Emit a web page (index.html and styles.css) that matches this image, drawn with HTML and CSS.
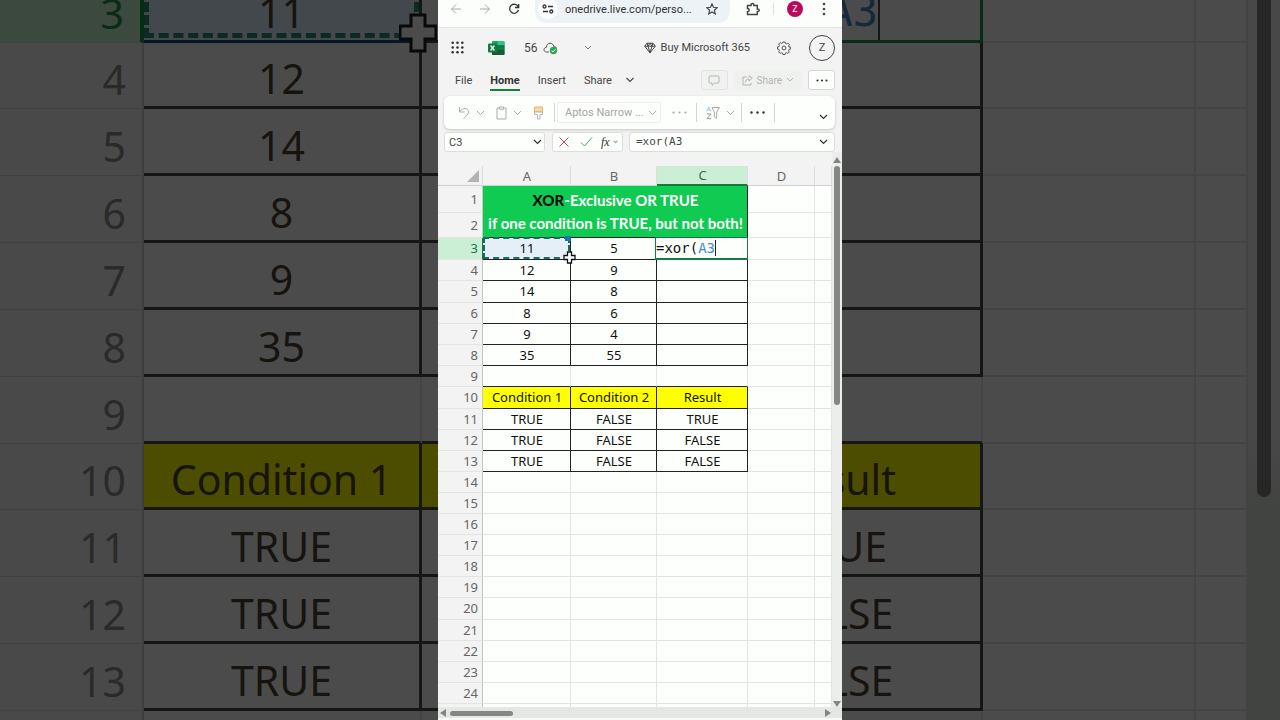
FILE: index.html
```html
<!DOCTYPE html>
<html lang="en">
<head>
<meta charset="utf-8">
<title>56 - Excel</title>
<link rel="stylesheet" href="styles.css">
</head>
<body>
<div class="stage">
  <aside class="backdrop backdrop-left" aria-hidden="true">
    <table class="zoomed">
      <colgroup><col class="z-head"><col class="z-col"><col class="z-col"></colgroup>
      <tr><th class="z-active">3</th><td class="z-ref">11<svg class="z-cross" width="38" height="40" viewBox="0 0 38 40"><path d="M12 2h14v11h11v13H26v12H12V26H1V13h11z" fill="#4b4b4b" stroke="#090909" stroke-width="3"/></svg></td><td></td></tr>
      <tr><th>4</th><td>12</td><td></td></tr>
      <tr><th>5</th><td>14</td><td></td></tr>
      <tr><th>6</th><td>8</td><td></td></tr>
      <tr><th>7</th><td>9</td><td></td></tr>
      <tr><th>8</th><td>35</td><td></td></tr>
      <tr><th>9</th><td class="z-open"></td><td class="z-open"></td></tr>
      <tr><th>10</th><td class="z-yellow">Condition 1</td><td class="z-yellow"></td></tr>
      <tr><th>11</th><td>TRUE</td><td></td></tr>
      <tr><th>12</th><td>TRUE</td><td></td></tr>
      <tr><th>13</th><td>TRUE</td><td></td></tr>
      <tr><th></th><td class="z-blank"></td><td class="z-blank"></td></tr>
    </table>
  </aside>

  <main class="panel">
    <div class="browser">
      <button class="icon" aria-label="Back"><svg width="12" height="12" viewBox="0 0 12 12"><path d="M11 6H1.500M6 1.500L1.500 6L6 10.500" stroke="#aaa"/></svg></button>
      <button class="icon" aria-label="Forward"><svg width="12" height="12" viewBox="0 0 12 12"><path d="M1 6h9.500M6 1.500L10.500 6L6 10.500" stroke="#aaa"/></svg></button>
      <button class="icon" aria-label="Reload"><svg width="12" height="12" viewBox="0 0 12 12"><path d="M10.300 4A4.500 4.500 0 1 0 10.500 7M10.700 1v3.500H7" stroke="#333" stroke-width="1.300"/></svg></button>
      <label class="address">
        <span class="site"><svg width="12" height="10" viewBox="0 0 12 10"><g stroke="#333" stroke-width="1.300"><circle cx="2.500" cy="2.500" r="1.500"/><path d="M6 2.500h5M1 7.500h5"/><circle cx="9.300" cy="7.500" r="1.500"/></g></svg></span>
        <input aria-label="Address" value="onedrive.live.com/perso...">
        <svg width="12" height="12" viewBox="0 0 12 12"><path d="M6 .9l1.500 3.400 3.700.4-2.800 2.500.8 3.700L6 9l-3.200 1.900.8-3.700L.8 4.700l3.700-.4z" stroke="#444" stroke-width="1.200"/></svg>
      </label>
      <button class="icon ext" aria-label="Extensions"><svg width="14" height="14" viewBox="0 0 14 14"><path d="M1.500 3.500H5c0-2.700 3-2.700 3 0h3.300V7c2.600 0 2.600 2.600 0 2.600v2.900H1.500V9.700c2.200 0 2.200-3.200 0-3.200z" stroke="#444" stroke-width="1.500"/></svg></button>
      <span class="divider"></span>
      <button class="profile" aria-label="Profile">Z</button>
      <button class="icon" aria-label="Browser menu"><svg width="4" height="14" viewBox="0 0 4 14"><g fill="#444"><circle cx="2" cy="2" r="1.300"/><circle cx="2" cy="7" r="1.300"/><circle cx="2" cy="12" r="1.300"/></g></svg></button>
    </div>

    <header class="titlebar">
      <button class="icon" aria-label="App launcher"><svg width="13" height="13" viewBox="0 0 13 13"><g fill="#333"><circle cx="1.700" cy="1.700" r="1.300"/><circle cx="6.500" cy="1.700" r="1.300"/><circle cx="11.300" cy="1.700" r="1.300"/><circle cx="1.700" cy="6.500" r="1.300"/><circle cx="6.500" cy="6.500" r="1.300"/><circle cx="11.300" cy="6.500" r="1.300"/><circle cx="1.700" cy="11.300" r="1.300"/><circle cx="6.500" cy="11.300" r="1.300"/><circle cx="11.300" cy="11.300" r="1.300"/></g></svg></button>
      <svg class="excel" width="17" height="16" viewBox="0 0 17 16"><rect x="4" y="1" width="12.500" height="14" rx="1" fill="#21a366"/><path d="M10 1h5.500a1 1 0 0 1 1 1v3H10z" fill="#33c481"/><path d="M4 5h6v5H4z" fill="#107c41"/><path d="M4 10h12.500v4a1 1 0 0 1-1 1H5a1 1 0 0 1-1-1z" fill="#185c37"/><path d="M10 10h6.500v-5H10z" fill="#107c41"/><rect y="3.500" width="9" height="9" rx="1" fill="#0f7b3e"/><path d="M2.600 5.500l3.800 5M6.400 5.500l-3.800 5" stroke="#fff" stroke-width="1.300"/></svg>
      <span class="filename">56</span>
      <svg class="cloud" width="15" height="14" viewBox="0 0 15 14"><path d="M6 11H3.500C.2 11 .2 6.500 3.400 6.300C3.600 1 10.300 1 10.800 5.600C12 5.600 13 6 13.500 7" stroke="#555"/><circle cx="10.500" cy="9.500" r="3.700" fill="#2fa84f"/><path d="M8.700 9.600l1.300 1.300 2.300-2.500" stroke="#fff"/></svg>
      <button class="icon more-file" aria-label="File details"><svg width="8" height="6" viewBox="0 0 8 6"><path d="M1 1l3 3 3-3" stroke="#777"/></svg></button>
      <a class="buy" href="#"><svg width="12" height="12" viewBox="0 0 12 12"><path d="M3 1.200h6l2.300 3L6 10.900.7 4.200zM.7 4.200h10.600M3 1.200l1 3L6 10.900l2-6.700 1-3M4 4.200l2-3 2 3" stroke="#444"/></svg>Buy Microsoft 365</a>
      <button class="icon" aria-label="Settings"><svg width="14" height="14" viewBox="0 0 14 14"><path d="M5.900 1h2.200l.4 1.500 1 .4 1.400-.8 1.500 1.500-.8 1.400.4 1L13.400 6v2.200l-1.500.4-.4 1 .8 1.400-1.500 1.500-1.400-.8-1 .4-.3 1.400H5.900l-.4-1.500-1-.4-1.400.8-1.500-1.500.8-1.400-.4-1L.6 8.100V5.900l1.500-.4.4-1-.9-1.400 1.500-1.500 1.400.8 1-.4z" stroke="#555"/><circle cx="7" cy="7" r="1.900" stroke="#555"/></svg></button>
      <button class="account" aria-label="Account">Z</button>
    </header>

    <nav class="tabs">
      <button class="tab">File</button>
      <button class="tab current">Home</button>
      <button class="tab">Insert</button>
      <button class="tab">Share</button>
      <button class="icon" aria-label="More tabs"><svg width="10" height="6" viewBox="0 0 10 6"><path d="M1.500 1L5 4.500 8.500 1" stroke="#444" stroke-width="1.100"/></svg></button>
      <div class="tab-actions">
        <button class="boxed pale" aria-label="Comments"><svg width="12" height="11" viewBox="0 0 12 11"><path d="M2 1h8a1 1 0 0 1 1 1v5a1 1 0 0 1-1 1H6.500L4 10.300V8H2a1 1 0 0 1-1-1V2a1 1 0 0 1 1-1z" stroke="#b5b5b5"/></svg></button>
        <button class="share"><svg width="11" height="11" viewBox="0 0 11 11"><path d="M5 2H1v8h8V8M3.500 7.500C3.500 5 5 4 7 4V6l3.300-3L7 .8V2.500" stroke="#b5b5b5"/></svg>Share<svg width="8" height="6" viewBox="0 0 8 6"><path d="M1 1l3 3 3-3" stroke="#b5b5b5"/></svg></button>
        <button class="boxed" aria-label="More options"><svg width="12" height="3" viewBox="0 0 12 3"><g fill="#333"><circle cx="1.500" cy="1.500" r="1.100"/><circle cx="6" cy="1.500" r="1.100"/><circle cx="10.500" cy="1.500" r="1.100"/></g></svg></button>
      </div>
    </nav>

    <div class="ribbon">
      <button class="icon" aria-label="Undo"><svg width="12" height="14" viewBox="0 0 12 14"><path d="M1.500 1v5h5M1.700 5.700C4.500 1 10.500 2 10.500 6c0 2-1.500 3.500-5 6.500" stroke="#aaa"/></svg></button>
      <button class="icon" aria-label="Undo list"><svg width="9" height="6" viewBox="0 0 9 6"><path d="M1 1l3.500 3.500L8 1" stroke="#aaa"/></svg></button>
      <button class="icon paste" aria-label="Paste"><svg width="11" height="14" viewBox="0 0 11 14"><path d="M3 2H1v11h9V2H8M3.500 1h4v2.200h-4z" stroke="#aaa"/></svg></button>
      <button class="icon" aria-label="Paste options"><svg width="9" height="6" viewBox="0 0 9 6"><path d="M1 1l3.500 3.500L8 1" stroke="#aaa"/></svg></button>
      <button class="icon brush" aria-label="Format painter"><svg width="11" height="14" viewBox="0 0 11 14"><path d="M1.500 1h8v5h-8z" fill="#fbd99a" stroke="#e6b668"/><path d="M1.500 6h8v2.500H7v4.500H4.500V8.500h-3z" stroke="#b5b5b5" fill="#fff"/></svg></button>
      <span class="rule"></span>
      <span class="font-box"><select aria-label="Font"><option>Aptos Narrow ...</option></select><svg width="9" height="6" viewBox="0 0 9 6"><path d="M1 1l3.500 3.500L8 1" stroke="#aaa"/></svg></span>
      <button class="icon dots" aria-label="More font options"><svg width="15" height="3" viewBox="0 0 15 3"><g fill="#aaa"><circle cx="1.500" cy="1.500" r="1.100"/><circle cx="7.500" cy="1.500" r="1.100"/><circle cx="13.500" cy="1.500" r="1.100"/></g></svg></button>
      <span class="rule"></span>
      <button class="icon filter" aria-label="Sort and filter"><svg width="14" height="14" viewBox="0 0 14 14"><path d="M6 1.500h7.500L10.700 6v6.500L8.300 11V6z" stroke="#aaa"/><path d="M.8 5.500L2.800.8l2 4.700M1.500 4h2.600" stroke="#a8c4dc"/><path d="M1 8h4L1 12.700h4.200" stroke="#999"/></svg></button>
      <button class="icon" aria-label="Filter options"><svg width="9" height="6" viewBox="0 0 9 6"><path d="M1 1l3.500 3.500L8 1" stroke="#aaa"/></svg></button>
      <span class="rule"></span>
      <button class="icon commands" aria-label="More commands"><svg width="15" height="3" viewBox="0 0 15 3"><g fill="#333"><circle cx="1.500" cy="1.500" r="1.200"/><circle cx="7.500" cy="1.500" r="1.200"/><circle cx="13.500" cy="1.500" r="1.200"/></g></svg></button>
      <span class="rule"></span>
      <button class="icon expand" aria-label="Ribbon display options"><svg width="9" height="6" viewBox="0 0 9 6"><path d="M1 1l3.500 3.500L8 1" stroke="#333" stroke-width="1.200"/></svg></button>
    </div>

    <div class="formula-row">
      <label class="field name-box"><input aria-label="Name box" value="C3"><svg width="9" height="6" viewBox="0 0 9 6"><path d="M1 1l3.500 3.500L8 1" stroke="#333" stroke-width="1.200"/></svg></label>
      <div class="field entry">
        <button class="icon" aria-label="Cancel"><svg width="12" height="12" viewBox="0 0 12 12"><path d="M1.500 1.500l9 9M10.500 1.500l-9 9" stroke="#c4405a"/></svg></button>
        <button class="icon" aria-label="Enter"><svg width="13" height="12" viewBox="0 0 13 12"><path d="M1 6.500l3.500 3.500L12 1.500" stroke="#4f9d74"/></svg></button>
        <button class="fx" aria-label="Insert function"><i>fx</i><svg width="5" height="4" viewBox="0 0 8 6"><path d="M1 1l3 3 3-3" stroke="#aaa" stroke-width="2"/></svg></button>
      </div>
      <label class="field formula"><input aria-label="Formula" value="=xor(A3"><svg width="9" height="6" viewBox="0 0 9 6"><path d="M1 1l3.500 3.500L8 1" stroke="#333" stroke-width="1.200"/></svg></label>
    </div>

    <div class="workspace">
      <div class="sheet">
        <table class="grid">
          <colgroup><col class="c-head"><col class="c-a"><col class="c-b"><col class="c-c"><col class="c-d"><col></colgroup>
          <tr class="letters"><th class="corner"><svg width="12" height="12" viewBox="0 0 12 12"><path d="M12 0v12H0z" fill="#b3b3b3"/></svg></th><th>A</th><th>B</th><th class="active-col">C</th><th>D</th><th></th></tr>
          <tr class="r1"><th>1</th><td class="banner" colspan="3" rowspan="2"><b>XOR</b>-Exclusive OR TRUE<br>if one condition is TRUE, but not both!</td><td></td><td></td></tr>
          <tr class="r2"><th>2</th><td></td><td></td></tr>
          <tr class="tall data"><th class="active-row">3</th><td class="ref">11<span class="ants"></span><span class="handle"></span><svg class="cross" width="13" height="13" viewBox="0 0 13 13"><path d="M4.500 1h4v3.500H12v4H8.500V12h-4V8.500H1v-4h3.500z" fill="#fff" stroke="#111" stroke-width="1.300"/></svg></td><td>5</td><td class="editing"><span class="edit-box">=xor(<em>A3</em></span></td><td></td><td></td></tr>
          <tr class="data"><th>4</th><td>12</td><td>9</td><td></td><td></td><td></td></tr>
          <tr class="tall data"><th>5</th><td>14</td><td>8</td><td></td><td></td><td></td></tr>
          <tr class="data"><th>6</th><td>8</td><td>6</td><td></td><td></td><td></td></tr>
          <tr class="data"><th>7</th><td>9</td><td>4</td><td></td><td></td><td></td></tr>
          <tr class="data"><th>8</th><td>35</td><td>55</td><td></td><td></td><td></td></tr>
          <tr class="spacer"><th>9</th><td></td><td></td><td></td><td></td><td></td></tr>
          <tr class="tall data heads"><th>10</th><td>Condition 1</td><td>Condition 2</td><td>Result</td><td></td><td></td></tr>
          <tr class="data"><th>11</th><td>TRUE</td><td>FALSE</td><td>TRUE</td><td></td><td></td></tr>
          <tr class="data"><th>12</th><td>TRUE</td><td>FALSE</td><td>FALSE</td><td></td><td></td></tr>
          <tr class="data"><th>13</th><td>TRUE</td><td>FALSE</td><td>FALSE</td><td></td><td></td></tr>
          <tr><th>14</th><td></td><td></td><td></td><td></td><td></td></tr>
          <tr><th>15</th><td></td><td></td><td></td><td></td><td></td></tr>
          <tr><th>16</th><td></td><td></td><td></td><td></td><td></td></tr>
          <tr><th>17</th><td></td><td></td><td></td><td></td><td></td></tr>
          <tr><th>18</th><td></td><td></td><td></td><td></td><td></td></tr>
          <tr><th>19</th><td></td><td></td><td></td><td></td><td></td></tr>
          <tr class="tall"><th>20</th><td></td><td></td><td></td><td></td><td></td></tr>
          <tr><th>21</th><td></td><td></td><td></td><td></td><td></td></tr>
          <tr><th>22</th><td></td><td></td><td></td><td></td><td></td></tr>
          <tr><th>23</th><td></td><td></td><td></td><td></td><td></td></tr>
          <tr><th>24</th><td></td><td></td><td></td><td></td><td></td></tr>
          <tr><th></th><td></td><td></td><td></td><td></td><td></td></tr>
        </table>
      </div>
      <div class="vscroll">
        <svg width="8" height="6" viewBox="0 0 8 6"><path d="M4 0l4 6H0z" fill="#858785"/></svg>
        <div class="vtrack"><div class="vthumb"></div></div>
        <svg width="8" height="6" viewBox="0 0 8 6"><path d="M4 6l4-6H0z" fill="#858785"/></svg>
      </div>
    </div>
    <div class="hscroll">
      <svg width="6" height="8" viewBox="0 0 6 8"><path d="M0 4l6-4v8z" fill="#858785"/></svg>
      <div class="htrack"><div class="hthumb"></div></div>
      <svg width="6" height="8" viewBox="0 0 6 8"><path d="M6 4L0 0v8z" fill="#858785"/></svg>
    </div>
  </main>

  <aside class="backdrop backdrop-right" aria-hidden="true">
    <table class="zoomed">
      <colgroup><col class="z-c"><col class="z-d"><col class="z-e"></colgroup>
      <tr><td class="z-edit"><span class="z-formula">=xor(<em>A3</em></span></td><td class="z-blank"></td><td class="z-blank"></td></tr>
      <tr><td></td><td class="z-blank"></td><td class="z-blank"></td></tr>
      <tr><td></td><td class="z-blank"></td><td class="z-blank"></td></tr>
      <tr><td></td><td class="z-blank"></td><td class="z-blank"></td></tr>
      <tr><td></td><td class="z-blank"></td><td class="z-blank"></td></tr>
      <tr><td></td><td class="z-blank"></td><td class="z-blank"></td></tr>
      <tr><td class="z-open"></td><td class="z-blank"></td><td class="z-blank"></td></tr>
      <tr><td class="z-yellow">Result</td><td class="z-blank"></td><td class="z-blank"></td></tr>
      <tr><td>TRUE</td><td class="z-blank"></td><td class="z-blank"></td></tr>
      <tr><td>FALSE</td><td class="z-blank"></td><td class="z-blank"></td></tr>
      <tr><td>FALSE</td><td class="z-blank"></td><td class="z-blank"></td></tr>
      <tr><td class="z-blank"></td><td class="z-blank"></td><td class="z-blank"></td></tr>
    </table>
    <div class="z-scroll"><div class="z-thumb"></div></div>
  </aside>
</div>
</body>
</html>
```
FILE: styles.css
```css
* { box-sizing: border-box; }

body {
  margin: 0;
  background: #4b4b4b;
  font-family: Roboto, "Liberation Sans", sans-serif;
  font-size: 11px;
  color: #444;
}

button, input, select {
  margin: 0;
  padding: 0;
  border: 0;
  background: none;
  font: inherit;
  color: inherit;
  outline: none;
}

svg { display: block; flex: none; fill: none; }

.stage {
  display: grid;
  grid-template-columns: 1fr minmax(404px, 31%) 1fr;
  height: 100vh;
  overflow: hidden;
}

.icon { display: flex; align-items: center; flex: none; }

/* Enlarged, dimmed sheet at both sides */
.backdrop { display: flex; overflow: hidden; min-width: 0; }
.backdrop-right { justify-content: flex-end; }

.zoomed {
  flex: none;
  align-self: flex-start;
  margin-top: -24px;
  border-collapse: separate;
  border-spacing: 0;
  table-layout: fixed;
  font: 41px/56px "Noto Sans", sans-serif;
  color: #17130f;
}
.backdrop-left .zoomed { width: 700px; }
.backdrop-right .zoomed { width: 555px; }
.z-head { width: 144px; }
.z-col { width: 278px; }
.z-c { width: 290px; }
.z-d { width: 213px; }
.z-e { width: 52px; }

.zoomed tr { height: 67px; }
.zoomed tr:nth-child(6n+2) { height: 66px; }
.zoomed th, .zoomed td { padding: 7px 0 0; overflow: hidden; white-space: nowrap; }
.zoomed th {
  padding-right: 16px;
  text-align: right;
  font-weight: 400;
  color: #2b2a29;
  background: #494949;
  border-right: 2px solid #3d3f3e;
  border-bottom: 1px solid #424242;
}
.zoomed td {
  text-align: center;
  border-right: 3px solid #151715;
  border-bottom: 3px solid #151715;
}
.zoomed .z-open { border-right: 2px solid #444; }
.zoomed .z-blank { border-right: 2px solid #444543; border-bottom: 2px solid #444543; }
.zoomed .z-yellow { background: #4d4d00; }
.zoomed .z-active { color: #082c15; background: #3c493f; border-right: 4px solid #082c15; }
.zoomed .z-ref {
  position: relative;
  overflow: visible;
  background: #42484c;
  border-bottom-color: #041726;
}
.zoomed .z-ref::after {
  content: "";
  position: absolute;
  inset: 0 0 2px 0;
  border: 5px dashed #0b2b20;
  border-top: 0;
}
.z-cross { position: absolute; right: -18px; bottom: -13px; z-index: 1; }
.zoomed .z-edit { padding: 0; border-color: #082c15; }
.z-formula {
  display: block;
  width: 187px;
  padding-top: 7px;
  border-right: 2px solid #151715;
  font-family: "DejaVu Sans Mono", monospace;
  font-size: 42px;
  direction: rtl;
  unicode-bidi: plaintext;
  text-align: right;
}
.z-formula em { font-style: normal; color: #15283c; }
.z-scroll { flex: none; width: 32px; padding: 0 9px; background: linear-gradient(#484848, #484848 60%, #424441 70%); }
.z-thumb { width: 14px; height: 69%; background: #272727; border-radius: 0 0 7px 7px; }

/* Spreadsheet window */
.panel { display: flex; flex-direction: column; min-width: 0; background: #f3f3f3; overflow: hidden; }

.browser {
  display: flex;
  align-items: center;
  height: 28px;
  padding: 0 16px 10px 12px;
  gap: 17px;
  background: #fcfefb;
  border-bottom: 1px solid #e3e5e3;
}
.address {
  display: flex;
  align-items: center;
  flex: 1;
  min-width: 0;
  align-self: flex-start;
  height: 23px;
  margin: 0 -1px 0 -2px;
  padding: 0 12px 5px 3px;
  background: #edf2f7;
  border-radius: 0 0 12px 12px;
}
.site { display: grid; place-items: center; width: 20px; height: 20px; background: #fff; border-radius: 10px; margin-right: 7px; }
.address input { flex: 1; min-width: 0; height: 16px; color: #333; }
.divider { width: 1px; height: 12px; margin: 0 -4px; background: #d9e2ee; }
.profile { width: 16px; height: 16px; margin-right: 2px; border-radius: 8px; background: #b80a5b; color: #fff; font-size: 9px; }

.titlebar { display: flex; align-items: center; height: 39px; padding: 0 7px 0 13px; }
.excel { margin-left: 24px; }
.filename { margin: 0 5px 0 19px; font-size: 12px; }
.more-file { margin-left: 26px; }
.buy { display: flex; align-items: center; gap: 5px; margin: 0 27px 0 auto; color: #444; text-decoration: none; }
.account { width: 26px; height: 26px; margin-left: 18px; border: 1px solid #444; border-radius: 13px; }

.tabs { display: flex; align-items: center; height: 26px; padding: 0 7px 0 17px; gap: 18px; }
.tab { position: relative; height: 24px; }
.current { font-weight: 700; color: #333; }
.current::after { content: ""; position: absolute; left: 0; right: 0; bottom: 1px; height: 2px; background: #15803f; }
.tabs > .icon { margin-left: -5px; }
.tab-actions { display: flex; gap: 6px; margin-left: auto; }
.boxed { display: grid; place-items: center; width: 27px; height: 20px; background: #fdfffc; border: 1px solid #d6d6d6; border-radius: 3px; }
.pale { background: #f0f2ef; border-color: #e2e4e1; }
.share { display: flex; align-items: center; gap: 4px; height: 20px; padding: 0 8px; background: #eff1ee; border-radius: 3px; color: #b5b5b5; font-size: 10px; }

.ribbon {
  display: flex;
  align-items: center;
  height: 33px;
  margin: 3px 7px 0 6px;
  padding: 0 7px 0 14px;
  gap: 6px;
  background: #fdfffc;
  border-radius: 6px;
  box-shadow: 0 1px 3px #00000030;
}
.paste, .brush { margin-left: 5px; }
.rule { flex: none; width: 1px; height: 19px; background: #d5d7d4; }
.brush + .rule { margin: 0 -4px 0 4px; }
.font-box { display: flex; align-items: center; flex: 1; height: 21px; min-width: 0; max-width: 104px; padding: 0 3px 0 7px; border: 1px solid #eceeeb; border-radius: 2px; color: #a5a5a5; }
.font-box select { flex: 1; min-width: 0; appearance: none; }
.dots { margin: 0 3px 0 5px; }
.filter { margin-left: 3px; }
.commands { margin: 0 3px 0 2px; }
.expand { margin: 9px 0 0 auto; }

.formula-row { display: flex; gap: 7px; padding: 3px 7px 0 6px; }
.field { display: flex; align-items: center; height: 20px; padding: 0 6px 0 4px; background: #fdfffc; border: 1px solid #dcdedb; border-radius: 3px; }
.field input { flex: 1; min-width: 0; }
.name-box { flex: none; width: 101px; padding-right: 2px; }
.entry { flex: none; width: 71px; padding: 0 3px 0 5px; gap: 10px; }
.fx { display: flex; align-items: center; gap: 3px; margin-left: -2px; font: 12px "Liberation Serif", serif; color: #333; }
.formula { flex: 1; min-width: 0; padding-left: 6px; margin-left: -1px; font-family: "DejaVu Sans Mono", monospace; }
.formula input { padding-bottom: 2px; }

.workspace { display: flex; flex: 1; min-height: 0; }
.sheet { flex: 1; min-width: 0; padding-top: 14px; overflow: hidden; }

.grid {
  width: 100%;
  border-collapse: separate;
  border-spacing: 0;
  table-layout: fixed;
  font: 13px/19px "Noto Sans", sans-serif;
  color: #111;
  background: #fdfffc;
}
.c-head { width: 45px; }
.c-a { width: 88px; }
.c-b { width: 86px; }
.c-c { width: 91px; }
.c-d { width: 67px; }

.grid tr { height: 21px; }
.grid .letters { height: 20px; line-height: 18px; }
.grid .r1 { height: 27px; }
.grid .r2 { height: 25px; }
.grid .tall { height: 22px; }
.grid th, .grid td { padding: 0; border-right: 1px solid #e2e5e1; border-bottom: 1px solid #e2e5e1; }
.grid th { padding-right: 4px; text-align: right; font-weight: 400; color: #666; background: #f3f3f3; border-right-color: #c6c8c6; }
.grid .letters th { padding: 0 0 0 1px; text-align: center; border-right-color: #dddfdd; border-bottom-color: #cfd1cf; }
.grid .letters .corner { padding-right: 3px; }
.corner svg { margin-left: auto; }
.grid .letters .active-col { color: #3d6b4e; background: #caefd5; border-bottom: 2px solid #157a3f; }
.grid .active-row { color: #217346; background: #caefd5; border-right-color: #157a3f; }
.grid td { padding-left: 1px; text-align: center; }

.grid .data td:nth-child(-n+4) { border-right-color: #222; border-bottom-color: #222; }
.grid .spacer td:nth-child(-n+4) { border-bottom-color: #222; }
.grid .heads td:nth-child(-n+4) { background: #ff0; }
.grid .banner {
  border-right-color: #222;
  border-bottom-color: #222;
  background: #10cb52;
  color: #fff;
  font: 700 15px/23px Lato, sans-serif;
  white-space: nowrap;
}
.banner b { color: #111; }

.grid .ref { position: relative; background: #e6eef8; }
.ants { position: absolute; inset: -1px 0 0 0; border: 2px dashed #1c6b62; }
.handle { position: absolute; top: -2px; right: -1px; width: 6px; height: 5px; background: #1f6fb5; }
.cross { position: absolute; right: -6px; bottom: -5px; z-index: 2; }
.grid .editing { position: relative; }
.edit-box {
  position: absolute;
  inset: -1px -1px -1px -2px;
  border: 1px solid #157a3f;
  border-bottom-width: 2px;
  background: #fdfffc;
  text-align: left;
  font: 14px/21px "DejaVu Sans Mono", monospace;
}
.edit-box em { font-style: normal; color: #4a8cc4; border-right: 1px solid #222; }

.vscroll { display: flex; flex: none; flex-direction: column; align-items: center; gap: 3px; width: 10px; padding-top: 5px; background: #eceeeb; }
.vtrack { flex: 1; width: 6px; }
.vthumb { height: 45%; border-radius: 3px; background: #858785; }
.hscroll { display: flex; flex: none; align-items: center; gap: 4px; height: 13px; padding: 1px 11px 0 2px; background: #e4e7e3; border-bottom: 2px solid #f8faf7; }
.htrack { flex: 1; }
.hthumb { width: 17%; height: 5px; border-radius: 3px; background: #858785; }
```
